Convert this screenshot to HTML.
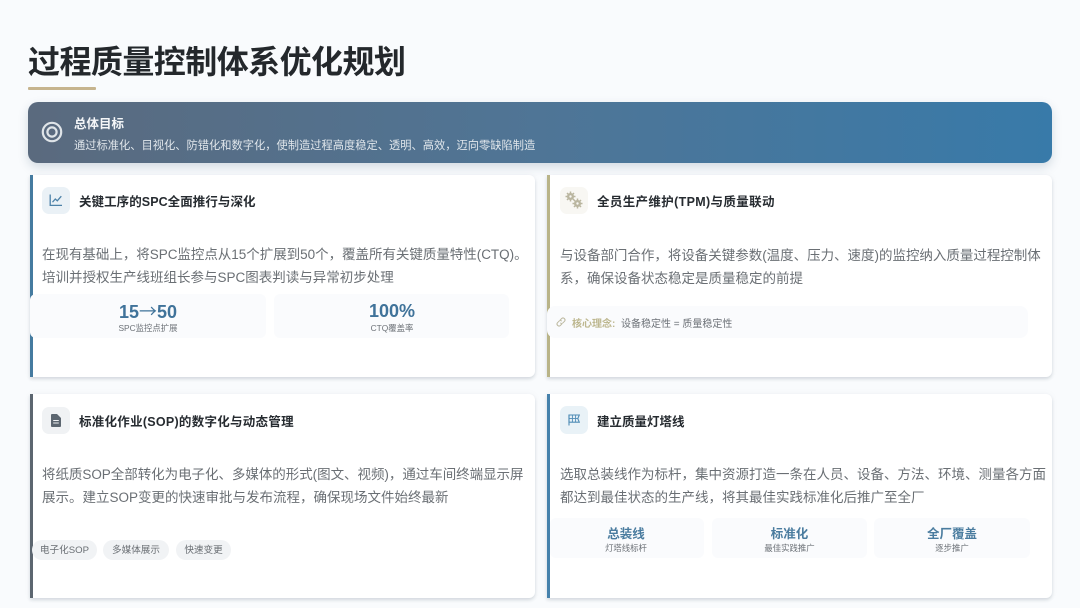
<!DOCTYPE html>
<html lang="zh-CN"><head><meta charset="utf-8"><title>过程质量控制体系优化规划</title>
<style>
*{margin:0;padding:0;box-sizing:border-box}
html,body{width:1080px;height:608px;overflow:hidden;background:#f9fbfd}
body{position:relative;font-family:"Liberation Sans","Noto Sans CJK SC",sans-serif}
#w{position:absolute;left:0;top:0;width:1080px;height:608px;filter:blur(.35px);background:#f9fbfd}
.t{position:absolute;white-space:nowrap;line-height:20px;height:20px}
.c{text-align:center}
.card{position:absolute;width:505px;background:#fff;border-radius:0 6px 6px 0;border-left:3px solid;box-shadow:0 2px 3px rgba(40,60,80,.16),0 0 8px rgba(40,60,80,.04)}
.ib{position:absolute;width:28px;height:27px;border-radius:7px}
.h{font-size:12.5px;font-weight:700;color:#262b30}
.b{font-size:13.5px;color:#6a6f74}
.box{position:absolute;background:#fafbfd;border-radius:6px}
.sv{font-size:18px;font-weight:700;color:#40739a}
.sl{font-size:8.4px;color:#6d7278}
.sv2{font-size:12.5px;font-weight:700;color:#4a7c9f}
.tag{position:absolute;top:540px;height:20px;border-radius:10px;background:#f1f3f5;font-size:9.6px;color:#6a6f74;line-height:21px;text-align:center;white-space:nowrap}
svg{position:absolute;display:block}
</style></head><body><div id="w">
<div class="t" style="left:28px;top:42px;height:40px;line-height:40px;font-size:32px;font-weight:700;color:#24282c;letter-spacing:-.55px">过程质量控制体系优化规划</div>
<div style="position:absolute;left:28px;top:87px;width:68px;height:3px;background:#c6b48e;border-radius:1px"></div>

<div style="position:absolute;left:28px;top:102px;width:1024px;height:61px;border-radius:10px;background:linear-gradient(90deg,#5a6a7e,#4f7596 50%,#387aa9);box-shadow:0 4px 10px rgba(40,70,100,.18)"></div>
<svg style="left:41px;top:121px" width="22" height="22" viewBox="0 0 22 22" fill="none" stroke="#dfe4e8"><circle cx="11" cy="11" r="9.2" stroke-width="2.2"/><circle cx="11" cy="11" r="4.6" stroke-width="2.2"/></svg>
<div class="t" style="left:74px;top:114px;font-size:12.5px;font-weight:700;color:#f4f6f8">总体目标</div>
<div class="t" style="left:74px;top:136px;font-size:11.25px;color:#e0e6eb">通过标准化、目视化、防错化和数字化，使制造过程高度稳定、透明、高效，迈向零缺陷制造</div>

<div class="card" style="left:30px;top:175px;height:202px;border-color:#457ba0"></div>
<div class="card" style="left:547px;top:175px;height:202px;border-color:#b9b488"></div>
<div class="card" style="left:30px;top:394px;height:204px;border-color:#5c6670"></div>
<div class="card" style="left:547px;top:394px;height:204px;border-color:#4682ac"></div>

<div class="ib" style="left:42px;top:187px;background:#eaf1f6"></div>
<svg style="left:49px;top:193px" width="14" height="14" viewBox="0 0 14 14" fill="none" stroke="#4d82a8" stroke-width="1.3"><path d="M1.2 1.5V12.4H13"/><path d="M3.5 9.2 6.3 6 8.3 7.8 12.3 3.2"/></svg>
<div class="t h" style="left:79px;top:192px;letter-spacing:.06px">关键工序的SPC全面推行与深化</div>
<div class="t b" style="left:42px;top:245px;letter-spacing:-.03px">在现有基础上，将SPC监控点从15个扩展到50个，覆盖所有关键质量特性(CTQ)。</div>
<div class="t b" style="left:42px;top:268px">培训并授权生产线班组长参与SPC图表判读与异常初步处理</div>
<div class="box" style="left:30px;top:294px;width:236px;height:44px"></div>
<div class="box" style="left:274px;top:294px;width:235px;height:44px"></div>
<div class="t c sv" style="left:30px;top:301px;width:236px">15<span style="font-family:'Noto Sans CJK SC',sans-serif;font-weight:400">→</span>50</div>
<div class="t c sl" style="left:30px;top:318px;width:236px">SPC监控点扩展</div>
<div class="t c sv" style="left:274px;top:301px;width:236px">100%</div>
<div class="t c sl" style="left:274px;top:318px;width:236px">CTQ覆盖率</div>

<div class="ib" style="left:560px;top:187px;background:#f8f7f3"></div>
<svg style="left:565px;top:191px" width="18" height="18" viewBox="0 0 18 18" fill="#bab6a0"><circle cx="5.5" cy="5.5" r="3.5"/><circle cx="12.5" cy="12.5" r="3.5"/><g stroke="#bab6a0" stroke-width="1.5"><path d="M5.5 .5V10.5M.5 5.5H10.5M2 2 9 9M9 2 2 9M12.5 7.5V17.5M7.5 12.5H17.5M9 9 16 16M16 9 9 16"/></g><circle cx="5.5" cy="5.5" r="1.2" fill="#f8f7f3"/><circle cx="12.5" cy="12.5" r="1.2" fill="#f8f7f3"/></svg>
<div class="t h" style="left:597px;top:192px;letter-spacing:.35px">全员生产维护(TPM)与质量联动</div>
<div class="t b" style="left:560px;top:246px;letter-spacing:-.02px">与设备部门合作，将设备关键参数(温度、压力、速度)的监控纳入质量过程控制体</div>
<div class="t b" style="left:560px;top:269px">系，确保设备状态稳定是质量稳定的前提</div>
<div class="box" style="left:547px;top:306px;width:481px;height:32px;border-radius:8px"></div>
<svg style="left:555px;top:316px" width="12" height="12" viewBox="0 0 12 12" fill="none" stroke="#bdb9a0" stroke-width="1"><path d="M5 4.2 6.8 2.4a2 2 0 0 1 2.8 2.8L8 6.8a2 2 0 0 1-2.8 0"/><path d="M7 7.8 5.2 9.6a2 2 0 0 1-2.8-2.8L4 5.2a2 2 0 0 1 2.8 0"/></svg>
<div class="t" style="left:572px;top:315px;font-size:10px;font-weight:700;color:#bdb78f">核心理念:</div>
<div class="t" style="left:621px;top:315px;font-size:10px;color:#6d7278">设备稳定性 = 质量稳定性</div>

<div class="ib" style="left:42px;top:407px;background:#f0f2f4"></div>
<svg style="left:51px;top:414px" width="10" height="13" viewBox="0 0 10 13"><path fill="#5c6670" d="M1 0H6L10 4V12a1 1 0 0 1-1 1H1a1 1 0 0 1-1-1V1a1 1 0 0 1 1-1Z"/><path stroke="#eef0f2" stroke-width="1" d="M2.2 6.5H7.8M2.2 9H7.8"/></svg>
<div class="t h" style="left:79px;top:412px;letter-spacing:.27px">标准化作业(SOP)的数字化与动态管理</div>
<div class="t b" style="left:42px;top:465px;letter-spacing:-.04px">将纸质SOP全部转化为电子化、多媒体的形式(图文、视频)，通过车间终端显示屏</div>
<div class="t b" style="left:42px;top:488px">展示。建立SOP变更的快速审批与发布流程，确保现场文件始终最新</div>
<div class="tag" style="left:32px;width:65px">电子化SOP</div>
<div class="tag" style="left:103px;width:66px">多媒体展示</div>
<div class="tag" style="left:176px;width:55px">快速变更</div>

<div class="ib" style="left:560px;top:406px;background:#e9f2f7;height:28px"></div>
<svg style="left:568px;top:414px" width="12" height="12" viewBox="0 0 12 12" fill="none" stroke="#4f8cb6" stroke-width="1.1"><path d="M1 .5V11.5"/><path d="M1 1H11.3L9.8 4.6 11.3 8.2H1Z"/><path d="M1 4.6H9.8M4.4 1V8.2M7.6 1V8.2" stroke-width=".9"/></svg>
<div class="t h" style="left:597px;top:412px">建立质量灯塔线</div>
<div class="t b" style="left:560px;top:465px">选取总装线作为标杆，集中资源打造一条在人员、设备、方法、环境、测量各方面</div>
<div class="t b" style="left:560px;top:488px">都达到最佳状态的生产线，将其最佳实践标准化后推广至全厂</div>
<div class="box" style="left:550px;top:518px;width:154px;height:40px"></div>
<div class="box" style="left:712px;top:518px;width:155px;height:40px"></div>
<div class="box" style="left:874px;top:518px;width:156px;height:40px"></div>
<div class="t c sv2" style="left:549px;top:524px;width:154px">总装线</div>
<div class="t c sl" style="left:549px;top:538px;width:154px">灯塔线标杆</div>
<div class="t c sv2" style="left:712px;top:524px;width:155px">标准化</div>
<div class="t c sl" style="left:712px;top:538px;width:155px">最佳实践推广</div>
<div class="t c sv2" style="left:874px;top:524px;width:156px">全厂覆盖</div>
<div class="t c sl" style="left:874px;top:538px;width:156px">逐步推广</div>
</div></body></html>
